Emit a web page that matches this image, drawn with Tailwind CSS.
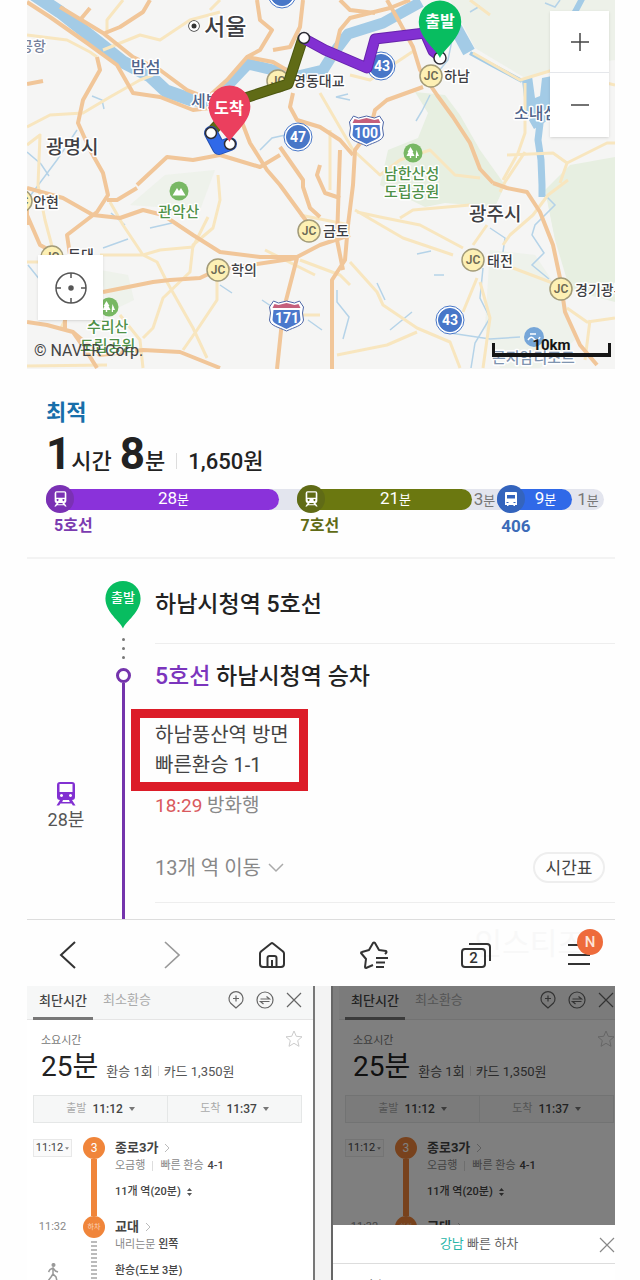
<!DOCTYPE html>
<html lang="ko">
<head>
  <meta charset="UTF-8" />
  <meta name="viewport" content="width=device-width, initial-scale=1.0"/>
  <title>길찾기 - 하남시청역 5호선</title>
  <script src="https://cdn.jsdelivr.net/npm/@tailwindcss/browser@4"></script>
</head>
<body class="bg-[#fefefe] text-[#222] font-['Roboto','Noto_Sans_CJK_KR',sans-serif]">

  <!-- Icons -->
  <svg class="hidden">
    <symbol id="pin" viewBox="0 0 42 56"><path d="M21 56C18 48 .5 37 .5 21a20.500 20.500 0 0 1 41 0C41.500 37 24 48 21 56z"/></symbol>
    <symbol id="train" viewBox="0 0 20 24">
      <path fill-rule="evenodd" d="M4 0h12a3 3 0 0 1 3 3v12a3 3 0 0 1-3 3H4a3 3 0 0 1-3-3V3a3 3 0 0 1 3-3zM3.500 2V10H16.500V2zM5.500 12a1.500 1.500 0 1 0 .01 0zM14.500 12a1.500 1.500 0 1 0 .01 0z"/>
      <path d="M4 18h3l-.8 2h7.600L13 18h3l3.500 5.500h-2.600L15.500 21.500h-11L3.100 23.500H.5z"/>
    </symbol>
    <symbol id="bus" viewBox="0 0 14 14"><path fill-rule="evenodd" d="M2 0h10q1 0 1 1v12h-2v1H9.500v-1h-5v1H3v-1H1V1q0-1 1-1zM3 3v3.500h8V3zM2.500 10v1h2v-1zM9.500 10v1h2v-1z"/></symbol>
    <symbol id="close" viewBox="0 0 16 16"><path d="M1 1l14 14M15 1L1 15" fill="none" stroke="currentColor" stroke-width="1.200"/></symbol>
    <symbol id="star" viewBox="0 0 18 18"><path d="M9 1l2.300 5.300 5.700.5-4.300 3.800 1.300 5.700L9 13.300 4 16.300l1.300-5.700L1 6.800l5.700-.5z" fill="none" stroke="currentColor"/></symbol>
    <symbol id="chevron" viewBox="0 0 6 10"><path d="M1 1l4 4-4 4" fill="none" stroke="currentColor"/></symbol>
    <symbol id="caret" viewBox="0 0 6 4"><path d="M0 0h6L3 4z" fill="currentColor"/></symbol>
    <symbol id="shield" viewBox="0 0 36 32">
      <path d="M5 1l5 2 8-2 8 2 5-2 4 6-1 6 1 7c-1 6-9 7-17 11C10 27 2 26 1 20l1-7-1-6z" fill="#fff" stroke="#4f68a8"/>
      <path d="M5 10h26l1 10c-1 4-7 5-14 9C11 25 5 24 4 20z" fill="#4b78cc"/>
      <path d="M6 4l4 1 8-2 8 2 4-1 2 4H4z" fill="#c5607c"/>
    </symbol>
    <symbol id="jc" viewBox="0 0 24 24">
      <circle cx="12" cy="12" r="11" fill="#fdf0b4" stroke="#a39b78" stroke-width="1.500"/>
      <text x="12" y="16" text-anchor="middle" font-size="12" font-weight="600" fill="#6d6a55">JC</text>
    </symbol>
    <symbol id="tree" viewBox="0 0 20 20">
      <circle cx="10" cy="10" r="9.500" fill="#78b864"/>
      <path d="M7.500 4l3 5h-1l2 4H8.200v2H6.800v-2H3.500l2-4h-1zM13.500 7l2.500 6h-2v2h-1.200v-3z" fill="#fff"/>
    </symbol>
    <symbol id="mountain" viewBox="0 0 20 20">
      <circle cx="10" cy="10" r="9.500" fill="#78b864"/>
      <path d="M3.500 14.500L8 7l2 3 2-3 4.500 7.500z" fill="#fff"/>
    </symbol>
  </svg>

  <main class="pl-[27px] pr-[25px]">

    <!-- Map -->
    <section class="relative overflow-hidden">
      <svg class="block w-full" viewBox="27 0 588 369" role="img" aria-label="경로 지도">
        <rect x="27" width="588" height="369" fill="#f5f5f4"/>
        <g fill="#e7efe1">
          <path d="M415 92l30 3 15 20 20 35 25 35-10 22-50-4-20 4-45-22 8-35 30-12 10-25z"/>
          <path d="M450 0h165v60l-60 8-30 10-50-30z" opacity=".6"/>
          <path d="M545 190l25-25 45-8v145l-45-12-15-50z"/>
          <path d="M490 250l45 5 30 45 10 40-35 28h-40l-15-40zM100 270l28 5 6 25-25 12zM130 205l35-30 50-5-15 40z" opacity=".5"/>
        </g>
        <!-- water -->
        <g fill="none" stroke="#a3cbe6" stroke-linejoin="round">
          <path d="M30-8L60 12 98 42 123 62 150 76 166 91 192 100" stroke-width="13"/>
          <path d="M190 100l20 3 20-20 18-19 25 6 25 6 25-6 10-16 15-20 35-11 38-21" stroke-width="11"/>
          <path d="M446 10l12 22 11 20" stroke-width="13"/>
          <path d="M470 53l22 12 30 16" stroke-width="4"/>
          <path d="M583-3l-8 15-14 15" stroke-width="6"/>
          <path d="M541 115l-3 25 3 20 1 25 0 12" stroke-width="7"/>
        </g>
        <path d="M522 80l10-4 3 22 5-2 2-18 20-4-10 20-2 25-16 10-8-14z" fill="#a3cbe6"/>
        <g fill="none" stroke="#b5d3e8" stroke-width="1.500">
          <path d="M92 96l10 4 2 9M260 150l12-12 18-4M27 200l30-40 20-30M430 95l-8 16-6 10M452 40l-4 20-10 12"/>
          <path d="M490 228l15 10-2 14M545 195l10 10-20 20-3 10 12 18-12 12 17 14M483 268l-3 30 10 20-15 25-4 25M337 290v12l12 15-6 22"/>
          <path d="M103 248l25-9M125 225l-14-12M220 285l12 8M28 265l12 15M350 100l-14 -3 12 -3M385 300l-8-17M390 330l22-18M417 254l14-3M434 275h10M450 333l40 6 30-2"/>
          <path d="M27 152l14 12 8 12M150 228l22-5M262 300l22 15M308 320l14 10M545 3l10 4 5-7M470 12l10-6"/>
        </g>
        <!-- local roads -->
        <g fill="none" stroke="#f8e6bf" stroke-width="3" stroke-linejoin="round">
          <path d="M27 35l40 5 23 12 7 5M27 127l23-12 33-2 27-16 30-17 13-5M107 34V20L123 0M103 50l37-15 20 5 30-20 30-8M27 145l13-10-2 50 7 35 8 30"/>
          <path d="M110 202l13 23 20 30 14 7 10 20 26 46 14 30M220 0l-10 10M218 175l2 25-7 28-20 17-3 27-27 26-10 30-10 10M217 270v30l-20 30-14 20M100 255h43l17-5 33-3 15-30"/>
          <path d="M320 93l33 57 27 25 20-15 30-10 25 25 25 3M473 53l47 27 33-10 62 15M525 83v50l-7 20-15 27M507 155l46-2 14 10-7 20M567 163l40-20h8M470 0l20 15M300 215l50 10M330 130v60"/>
          <path d="M357 212l23 5 40 8 43 23M355 210l48 28 50 17M400 218l13-8 57-5M350 262l27 30 6 13 34 23 33 14 10 26M337 355l50-10 30-13M477 278l-14 34M480 282l10 36-7 50M513 268l37 14 15 8M567 308l20 14 28-4M590 320l-5 40M487 225l-14 20M503 245l7-10 23-20 15-20 20-15"/>
          <path d="M27 262h30M60 330l10-20M120 315l20 25 3 28M27 366l80-1M265 250l50 25M320 315h-30M350 75l20 5 45-30M500 192l5-10 20-30M300 260l40 15 10 10"/>
        </g>
        <!-- highways -->
        <g fill="none" stroke="#f1c699" stroke-width="4" stroke-linejoin="round">
          <path d="M27 2l23 15 37 26 30 22 16 28 27 4 33 13 17-2M60 7l43 26 30 24 27 13 27 20 20 8 20-18 20-23 26 5 17 10M97 57l3 13-17 30-5 23 12 27 13 23 5 22-11 17-30 23 3 20M150 0l-7 12-23 15-15 6M27 84l16-3"/>
          <path d="M27 225l0-20M137 185l30-28 26 3 27-5 40 12 20-12M137 188l-20 12h-10M240 117l10 26 17 27 13 15 27 37M280 147l23 33 0 7 7 21 10 9M257 0l3 20 12 10-12 20-13 7M303 0l-3 27-10 20-17 3M293 93l-3 14 7 13 23 7 20 13 13 15M320 165l-3 10 8 18 15 5"/>
          <path d="M423 87l-36 13-12 10-5 20-15 20-2 35-5 40-3 35-13 20v89M340 150l-3 90 6 30M387 0l13 23 13 24 7 23 13 10M420 70l17 25 16 22 17 26 10 26 13 14M493 183l14 5 20 4 13 20 13 33 7 33 5 34 15 33 17 20"/>
          <path d="M27 188l36 10 30 17 27 3 23-8 20 5 30 20 27 17 40 5h37l23-12 30-10M103 292l50-10 17-2 30-2 17-8 80-12M297 258l-7 27-7 27-6 57M27 322l20 3 26 7 14 20 10 16M73 332l27 23 43-5 37 2 40 16M27 215l13 30 13 7M340 0l10 10 25 3M333 60l7-30 10-12 40-10 20-8M80 20l10-12M70 255l-5 25v50"/>
        </g>

        <!-- place labels -->
        <g fill="#3f3f44" stroke="#fff" stroke-width="3" paint-order="stroke" stroke-linejoin="round" font-weight="500" font-size="14">
          <circle cx="194" cy="26" r="5" fill="#fff" stroke="#333" stroke-width="1.500"/>
          <circle cx="194" cy="26" r="2.500" fill="#333" stroke="none"/>
          <text x="204" y="35" font-size="23">서울</text>
          <text x="46" y="154" font-size="19">광명시</text>
          <text x="469" y="221" font-size="19">광주시</text>
          <text x="20" y="51" fill="#76809a">공항</text>
          <text x="131" y="73" font-size="16" fill="#50658c">밤섬</text>
          <text x="191" y="107" font-size="16" fill="#50658c">세빛섬</text>
          <text x="514" y="119" font-size="16" fill="#50658c">소내섬</text>
          <text x="293" y="86">영동대교</text>
          <text x="444" y="81">하남</text>
          <text x="33" y="207">안현</text>
          <text x="231" y="275">학의</text>
          <text x="323" y="236">금토</text>
          <text x="487" y="266">태전</text>
          <text x="575" y="295">경기광주</text>
          <text x="68" y="260">둔대</text>
          <g fill="#4f9148" font-size="15">
            <text x="384" y="179">남한산성</text>
            <text x="384" y="197">도립공원</text>
            <text x="158" y="217">관악산</text>
            <text x="87" y="332">수리산</text>
            <text x="80" y="351">도립공원</text>
          </g>
          <text x="492" y="363" font-size="15" fill="#7f94b0">곤지암리조트</text>
        </g>
        <g>
          <use href="#jc" x="419" y="64" width="24" height="24"/>
          <use href="#jc" x="297" y="219" width="24" height="24"/>
          <use href="#jc" x="206" y="258" width="24" height="24"/>
          <use href="#jc" x="461" y="248" width="24" height="24"/>
          <use href="#jc" x="549" y="277" width="24" height="24"/>
          <use href="#jc" x="40" y="245" width="24" height="24"/>
          <use href="#jc" x="266" y="69" width="24" height="24"/>
          <use href="#jc" x="9" y="189" width="24" height="24"/>
          <use href="#tree" x="403" y="143" width="20" height="20"/>
          <use href="#mountain" x="169" y="181" width="20" height="20"/>
          <use href="#tree" x="99" y="297" width="20" height="20"/>
          <use href="#shield" x="348" y="115" width="37" height="32"/>
          <use href="#shield" x="268" y="300" width="37" height="32"/>
          <circle cx="534" cy="337" r="10" fill="#76a6d8"/>
          <path d="M528 340q3-5 6-1t6-2M530 334h6" stroke="#fff" stroke-width="1.500" fill="none"/>
        </g>
        <g fill="#4877c8" stroke="#4877c8">
          <circle cx="298" cy="137" r="14" fill="#fff"/><circle cx="298" cy="137" r="11.500"/>
          <circle cx="381" cy="66" r="14" fill="#fff"/><circle cx="381" cy="66" r="11.500"/>
          <circle cx="450" cy="320" r="14" fill="#fff"/><circle cx="450" cy="320" r="11.500"/>
          <circle cx="282" cy="-6" r="14" fill="#fff"/><circle cx="282" cy="-6" r="11.500"/>
          <g fill="#fff" stroke="none" font-weight="700" font-size="14" text-anchor="middle">
            <text x="298" y="142">47</text>
            <text x="382" y="71">43</text>
            <text x="450" y="325">43</text>
            <text x="366" y="138">100</text>
            <text x="287" y="323">171</text>
          </g>
        </g>

        <!-- route -->
        <g fill="none" stroke-linejoin="round">
          <path d="M303 38l-15 46-46 15-30 32" stroke="#4c5710" stroke-width="11"/>
          <path d="M303 38l-15 46-46 15-30 32" stroke="#606b16" stroke-width="9"/>
          <path d="M303 38l22 12 42 18 8-29 50-6 8 18 8 6" stroke="#6723ab" stroke-width="11"/>
          <path d="M303 38l22 12 42 18 8-29 50-6 8 18 8 6" stroke="#8230d2" stroke-width="9"/>
          <path d="M211 133l8 15 11-4" stroke="#2450b0" stroke-width="14" stroke-linecap="round"/>
          <path d="M211 133l8 15 11-4" stroke="#3069e8" stroke-width="12" stroke-linecap="round"/>
        </g>
        <g fill="#fff" stroke="#2d2d35" stroke-width="1.500">
          <circle cx="304" cy="38" r="5.500"/>
          <circle cx="211" cy="133" r="5.500"/>
          <circle cx="230" cy="144" r="5.500"/>
          <circle cx="440" cy="58" r="6"/>
        </g>
        <use href="#pin" x="208" y="85" width="43" height="57" fill="#eb3f5e"/>
        <use href="#pin" x="418" y="0" width="44" height="58" fill="#08bd60"/>
        <g fill="#fff" font-size="16" font-weight="700" text-anchor="middle">
          <text x="229" y="114">도착</text>
          <text x="440" y="27">출발</text>
        </g>
      </svg>

      <div class="absolute right-[6px] top-[11px] flex w-[59px] flex-col bg-white text-[#444] shadow">
        <button aria-label="확대" class="flex h-[62px] items-center justify-center border-b border-gray-200">
          <svg class="size-5" viewBox="0 0 20 20"><path d="M1 10h18M10 1v18" stroke="currentColor" stroke-width="1.500"/></svg>
        </button>
        <button aria-label="축소" class="flex h-16 items-center justify-center">
          <svg class="size-5" viewBox="0 0 20 20"><path d="M1 10h18" stroke="currentColor" stroke-width="1.500"/></svg>
        </button>
      </div>
      <button aria-label="현재 위치" class="absolute bottom-[49px] left-[11px] flex size-[65px] items-center justify-center bg-white text-[#555] shadow">
        <svg class="size-8" viewBox="0 0 32 32" fill="none" stroke="currentColor" stroke-width="1.500">
          <circle cx="16" cy="16" r="15"/>
          <path d="M16 1v5M16 26v5M1 16h5M26 16h5"/>
          <circle cx="16" cy="16" r="2" fill="currentColor"/>
        </svg>
      </button>
      <p class="absolute bottom-2 left-[7px] text-base/5 text-[#444]">© NAVER Corp.</p>
      <p class="absolute bottom-3 right-1 h-[14px] w-[119px] border-x-[3px] border-b-4 border-[#151515]"></p>
      <p class="absolute bottom-4 right-1 w-[119px] text-center text-[15px]/4 font-bold text-[#151515]">10km</p>
    </section>

    <!-- Summary -->
    <section class="border-b-2 border-[#f3f3f3] pb-5 pl-[19px] pr-[11px] pt-[30px]">
      <h1 class="text-[22px]/7 font-bold text-[#176eaa]">최적</h1>
      <p class="mt-1 flex h-[46px] items-baseline text-[22px]/[46px] font-medium">
        <b class="text-[44px]/[46px] font-bold">1</b>시간
        <b class="ml-2 text-[44px]/[46px] font-bold">8</b>분
        <span class="mx-[11px] h-4 w-px bg-[#ddd]"></span>1,650원
      </p>
      <div class="mt-2 flex h-7 items-center text-[17px]/[21px]">
        <div class="flex h-[21px] w-full rounded-full bg-[#e3e5ee]">
          <div class="flex flex-[233] items-center rounded-full bg-[#8a32da] text-white">
            <span class="flex size-7 items-center justify-center rounded-full bg-[#7a31b4]"><svg class="h-4 w-[13px] fill-white"><use href="#train"/></svg></span>
            <span class="flex-1 pr-[6px] text-center">28<small class="text-[13px]">분</small></span>
          </div>
          <div class="flex-[18]"></div>
          <div class="flex flex-[175] items-center rounded-full bg-[#6b7810] text-white">
            <span class="flex size-7 items-center justify-center rounded-full bg-[#606b16]"><svg class="h-4 w-[13px] fill-white"><use href="#train"/></svg></span>
            <span class="flex-1 pr-[6px] text-center">21<small class="text-[13px]">분</small></span>
          </div>
          <div class="flex-[25] text-center text-[#777]">3<small class="text-[13px]">분</small></div>
          <div class="flex flex-[75] items-center rounded-full bg-[#3069e8] text-white">
            <span class="flex size-7 items-center justify-center rounded-full bg-[#3464bd]"><svg class="size-[14px] fill-white"><use href="#bus"/></svg></span>
            <span class="flex-1 pr-[6px] text-center">9<small class="text-[13px]">분</small></span>
          </div>
          <div class="flex-[32] text-center text-[#777]">1<small class="text-[13px]">분</small></div>
        </div>
      </div>
      <div class="mt-[2px] flex text-base/[22px] font-bold">
        <span class="flex-[251] pl-2 text-[#7b3bb0]">5호선</span>
        <span class="flex-[198] pl-[10px] text-[#606b16]">7호선</span>
        <span class="flex-[109] pl-[14px] text-[17px]/[22px] text-[#3c6bb8]">406</span>
      </div>
    </section>

    <!-- Steps -->
    <section class="flex border-b border-[#ddd]">
      <div class="flex w-[78px] flex-col items-center pt-[223px] text-lg/7 text-[#555]">
        <svg class="h-6 w-5 fill-[#8230d2]"><use href="#train"/></svg>
        28분
      </div>
      <div class="flex w-9 flex-col items-center pt-[21px]">
        <div class="relative h-[49px] w-9">
          <svg class="h-[49px] w-9 fill-[#08bd60]"><use href="#pin"/></svg>
          <span class="absolute inset-x-0 top-[9px] text-center text-[13px]/[18px] font-medium text-white">출발</span>
        </div>
        <div class="flex h-[39px] flex-col items-center justify-center gap-[6px]">
          <i class="size-[3px] rounded-full bg-[#777]"></i>
          <i class="size-[3px] rounded-full bg-[#777]"></i>
          <i class="size-[3px] rounded-full bg-[#777]"></i>
        </div>
        <i class="size-[15px] rounded-full border-[3px] border-[#7434ac]"></i>
        <i class="w-[3px] flex-1 bg-[#7434ac]"></i>
      </div>
      <div class="flex-1 pb-4 pl-[14px]">
        <h2 class="border-b border-[#eee] pb-[22px] pt-[30px] text-[23px]/8 font-medium">하남시청역 5호선</h2>
        <div class="border-b border-[#eee] pb-[19px] pt-[17px]">
          <h2 class="text-[23px]/8 font-medium"><span class="text-[#7b35bd]">5호선</span> 하남시청역 승차</h2>
          <p class="-ml-6 mt-4 w-[177px] border-[9px] border-[#dc1c28] px-[15px] py-[2px] text-xl/[30px] whitespace-nowrap text-[#444]">하남풍산역 방면<br>빠른환승 1-1</p>
          <p class="mt-px text-[19px]/7 text-[#888]"><span class="text-[#d9595d]">18:29</span> 방화행</p>
          <div class="mt-8 flex items-center justify-between pr-[10px]">
            <button class="flex items-center gap-[7px] text-xl/[30px] text-[#888]">13개 역 이동
              <svg class="h-[10px] w-4" viewBox="0 0 16 10"><path d="M1 1l7 7 7-7" fill="none" stroke="#aaa" stroke-width="1.500"/></svg>
            </button>
            <button class="h-[31px] w-[72px] rounded-full border-2 border-[#eee] text-[17px]/[26px] text-[#444]">시간표</button>
          </div>
        </div>
      </div>
    </section>

    <!-- Browser toolbar -->
    <nav class="relative flex h-[66px] items-center justify-between pl-7 pr-[22px] pt-1 text-[#333]">
      <span class="absolute right-[30px] top-2 text-3xl/8 text-[#f8f8f8]">인스티즈</span>
      <button aria-label="뒤로"><svg class="h-7 w-7" viewBox="0 0 28 28"><path d="M20 1L6 14l14 13" fill="none" stroke="currentColor" stroke-width="2"/></svg></button>
      <button aria-label="앞으로" class="text-[#999]"><svg class="h-7 w-7" viewBox="0 0 28 28"><path d="M9 1l14 13L9 27" fill="none" stroke="currentColor" stroke-width="1.700"/></svg></button>
      <button aria-label="홈"><svg class="h-7 w-7" viewBox="0 0 28 28" fill="none" stroke="currentColor" stroke-width="2"><path d="M14 2.500q1-.8 2 0l10 8q1 1 1 2V23q0 3-3 3H6q-3 0-3-3V12.500q0-1 1-2z"/><path d="M10.500 26V17q0-2 2-2h5q2 0 2 2v9M15 19v7"/></svg></button>
      <button aria-label="즐겨찾기" class="relative"><svg class="h-7 w-[30px]" viewBox="0 0 30 28" fill="none" stroke="currentColor" stroke-width="2" stroke-linejoin="round"><path d="M15 24l-7 3q-1 0-1-1l1-8-5-6q0-1 1-1l7-2 4-7q1-1 2 0l4 7 7 1q1 1 0 2l-1 1"/><path d="M18 17h12M18 21.500h9M18 26h8"/></svg></button>
      <button aria-label="탭 2개" class="relative"><svg class="h-[27px] w-[31px]" viewBox="0 0 31 27" fill="none" stroke="currentColor" stroke-width="2"><rect x="1" y="7" width="23" height="18" rx="3"/><path d="M8 2h18q3 0 3 3v14"/></svg><span class="absolute left-0 top-[7px] w-[25px] text-center text-[15px]/[19px] font-medium">2</span></button>
      <button aria-label="메뉴" class="relative"><svg class="h-7 w-7" viewBox="0 0 28 28"><path d="M3 4h22M3 14h22M3 23h22" stroke="currentColor" stroke-width="2"/></svg><span class="absolute -top-3 left-3 size-[26px] rounded-full bg-[#ee6b3b] text-center text-[15px]/[26px] font-medium text-[#fde4d8]">N</span></button>
    </nav>

    <!-- Subway results -->
    <section class="flex h-[294px] overflow-hidden bg-[#f3f3f3]">
      <div id="result" class="flex-[288] border-r-2 border-[#777] bg-white">
        <div>
          <div class="flex h-[34px] items-center border-b border-[#e5e5e5] bg-[#f6f7f7] pl-[6px] pr-[11px] text-[13px]/[30px]">
            <button class="h-[34px] w-[60px] border-b-[3px] border-[#777] pb-1 font-medium text-[#444]">최단시간</button>
            <button class="ml-[10px] pb-[6px] text-[#aaa]">최소환승</button>
            <div class="ml-auto flex items-center gap-3 pb-[6px] text-[#666]">
              <svg class="h-[18px] w-4" viewBox="0 0 16 18" fill="none" stroke="currentColor" stroke-width="1.200"><path d="M8 17L2.500 12A7 7 0 1 1 13.500 12zM8 4.500v6M5 7.500h6"/></svg>
              <svg class="size-[18px]" viewBox="0 0 18 18" fill="none" stroke="currentColor" stroke-width="1.200"><circle cx="9" cy="9" r="8"/><path d="M4.500 8h9l-3-2.500M13.500 10.500h-9l3 2.500"/></svg>
              <svg class="size-4"><use href="#close"/></svg>
            </div>
          </div>
          <div class="relative px-[14px] pt-[13px]">
            <svg class="absolute right-[10px] top-[10px] size-[18px] text-[#ccc]"><use href="#star"/></svg>
            <p class="text-[11px]/4 text-[#777]">소요시간</p>
            <p class="flex h-9 items-baseline text-[13px]/9 text-[#555]"><span class="mr-2 text-[28px]/9 text-[#222]">25분</span>환승 1회<i class="mx-[5px] h-[10px] w-px bg-[#ddd]"></i>카드 1,350원</p>
          </div>
          <div class="ml-[6px] mr-[11px] mt-[10px] flex h-7 border border-[#e5e7e7] bg-[#f6f7f7] text-[12px]/[26px] font-medium text-[#444]">
            <button class="flex flex-1 items-center justify-center gap-[6px] border-r border-[#e5e7e7]"><span class="text-[11px] font-normal text-[#aaa]">출발</span>11:12<svg class="h-1 w-[6px] text-[#777]"><use href="#caret"/></svg></button>
            <button class="flex flex-1 items-center justify-center gap-[6px]"><span class="text-[11px] font-normal text-[#aaa]">도착</span>11:37<svg class="h-1 w-[6px] text-[#777]"><use href="#caret"/></svg></button>
          </div>
          <div class="flex pt-[14px] text-[11px]/4 text-[#444]">
            <div class="flex w-[51px] flex-col items-center">
              <button class="mt-[2px] flex h-[18px] w-[39px] items-center justify-center gap-[2px] border border-[#e8e8e8] bg-[#fafafa]">11:12<svg class="h-[3px] w-1 text-[#888]"><use href="#caret"/></svg></button>
              <span class="mt-[62px] text-[#888]">11:32</span>
              <svg class="mt-[28px] h-[18px] w-3" viewBox="0 0 12 18" fill="none" stroke="#999" stroke-width="1.500"><circle cx="6.500" cy="2" r="1.300" fill="#999"/><path d="M6 5v6l3 3 1 4M6 11l-2 3-3 4M1.500 9L3 6.500 6 5l2.500 3L11 9"/></svg>
            </div>
            <div class="ml-[5px] flex w-[22px] flex-col items-center">
              <span class="size-[22px] rounded-full bg-[#f0853a] text-center text-xs/[22px] text-white">3</span>
              <i class="h-[57px] w-[6px] bg-[#f0853a]"></i>
              <span class="size-[22px] rounded-full bg-[#f0853a] text-center text-[7px]/[22px] text-[#fbd3b8]">하차</span>
              <i class="mt-[3px] h-10 w-[6px] bg-[repeating-linear-gradient(#bbb_0_2px,#fff_2px_4px)]"></i>
            </div>
            <div class="flex-1 pl-[10px]">
              <p class="flex items-center gap-[6px] text-[13px]/[22px] font-bold">종로3가<svg class="h-[10px] w-[6px] text-[#bbb]"><use href="#chevron"/></svg></p>
              <p class="-mt-px flex items-center text-[#888]">오금행<i class="mx-[7px] h-[10px] w-px bg-[#ddd]"></i>빠른 환승<span class="ml-1 font-medium text-[#444]">4-1</span></p>
              <p class="mt-[10px] flex items-center gap-[6px] font-medium">11개 역(20분)<svg class="h-2 w-[5px] fill-[#555]" viewBox="0 0 5 8"><path d="M0 3h5L2.500 0zM0 5h5L2.500 8z"/></svg></p>
              <p class="mt-4 flex items-center gap-[6px] text-[13px]/[22px] font-bold">교대<svg class="h-[10px] w-[6px] text-[#bbb]"><use href="#chevron"/></svg></p>
              <p class="-mt-px text-[#888]">내리는문 <span class="font-medium text-[#444]">왼쪽</span></p>
              <p class="mt-[10px] font-medium">환승(도보 3분)</p>
            </div>
          </div>
        </div>
      </div>
      <div class="w-4 shrink-0"></div>
      <div class="relative flex-[284] overflow-hidden border-l-2 border-[#666] bg-white">
        <div id="resultCopy" class="-mr-[10px] ml-[6px]"></div>
        <div class="absolute inset-0 bg-black/50"></div>
        <div class="absolute inset-x-0 bottom-0 h-[55px] bg-white">
          <div class="relative flex h-[39px] items-center justify-center border-b border-[#ddd] pl-[10px] text-[13px]/5 text-[#666]">
            <span><span class="text-[#27b5a8]">강남</span> 빠른 하차</span>
            <button aria-label="닫기" class="absolute right-0 top-3 text-[#888]"><svg class="size-4"><use href="#close"/></svg></button>
          </div>
          <p class="flex items-center gap-1 pl-3 pt-[14px] text-[13px]/4 text-[#555]"><i class="size-[13px] rounded-full bg-[#e0b62c]"></i>반호문</p>
        </div>
      </div>
    </section>
  </main>

  <script>
    // the dimmed screen shows the same result list
    const result = document.querySelector("#result > div");
    document.getElementById("resultCopy").appendChild(result.cloneNode(true));
  </script>
</body>
</html>
